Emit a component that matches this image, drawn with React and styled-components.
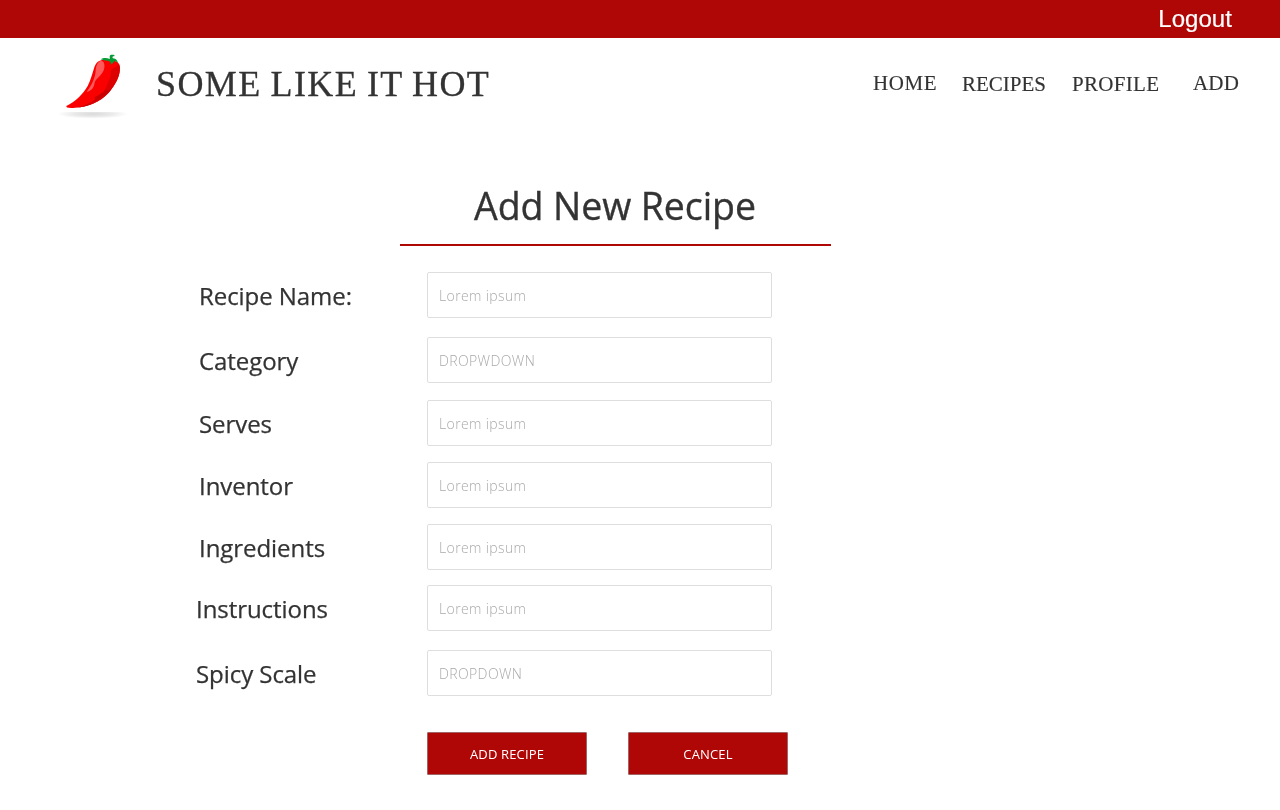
import React from "react";
import styled, { createGlobalStyle } from "styled-components";

const red = "#af0606";
const ink = "#333333";

const GlobalStyle = createGlobalStyle`
  * { box-sizing: border-box; }
  body { margin: 0; background: #fff; color: ${ink}; font-family: "Open Sans", sans-serif; }
`;

const Page = styled.div`
  width: 1280px;
  height: 810px;
  overflow: hidden;
  will-change: transform;
`;

const TopBar = styled.div`
  height: 38px;
  background: ${red};
  display: flex;
  justify-content: flex-end;
  padding: 5px 48px 0 0;
`;

const Logout = styled.a`
  color: #fff;
  font: 24px/28px "Liberation Sans", sans-serif;
  letter-spacing: 0.05px;
  -webkit-text-stroke: 0.2px;
`;

const Header = styled.header`
  height: 107px;
  display: flex;
  align-items: flex-start;
  padding-left: 50px;
`;

const Logo = styled.svg`
  width: 90px;
  height: 80px;
  margin-top: 7px;
  flex: none;
`;

const Brand = styled.div`
  width: 717px;
  margin: 26px 0 0 15px;
  padding-left: 1px;
  font: 36px/40px "Liberation Serif", serif;
  letter-spacing: 1.4px;
  word-spacing: -1.5px;
  white-space: nowrap;
  -webkit-text-stroke: 0.3px;
`;

const Nav = styled.nav`
  display: flex;
  padding-top: 33px;
`;

const NavLink = styled.a`
  width: ${(p) => p.$width}px;
  padding-top: ${(p) => p.$drop || 0}px;
  padding-left: ${(p) => p.$shift || 0}px;
  font: 21px/24px "Liberation Serif", serif;
  letter-spacing: ${(p) => p.$tracking || 0}px;
  white-space: nowrap;
  -webkit-text-stroke: 0.15px;
`;

const Title = styled.h1`
  width: 431px;
  height: 66px;
  margin: 35px 0 26px 400px;
  padding-right: 1px;
  border-bottom: 2px solid ${red};
  font-size: 37.5px;
  line-height: 52px;
  font-weight: 400;
  letter-spacing: -0.08px;
  text-align: center;
  white-space: nowrap;
  -webkit-text-stroke: 0.35px;
`;

const Row = styled.div`
  display: flex;
  height: 46px;
  margin-bottom: ${(p) => p.$gap}px;
  padding-left: ${(p) => p.$indent}px;
`;

const Label = styled.label`
  width: ${(p) => p.$width}px;
  font-size: 24px;
  line-height: 48px;
  letter-spacing: -0.06px;
  white-space: nowrap;
  -webkit-text-stroke: 0.25px;
`;

const Field = styled.div`
  width: 345px;
  height: 46px;
  padding-left: 11px;
  border: 1px solid #dedede;
  border-radius: 2px;
  color: #a9a9a9;
  font-size: 14px;
  font-weight: 300;
  line-height: 45px;
  letter-spacing: 0.38px;
`;

const Actions = styled.div`
  display: flex;
  gap: 41px;
  padding-left: 427px;
`;

const Button = styled.button`
  width: 160px;
  height: 43px;
  padding: 1px 0 0;
  border: 1px solid #a06464;
  border-radius: 1px;
  background: ${red};
  color: #fff;
  font: 13px/20px "Open Sans", sans-serif;
  letter-spacing: 0.15px;
`;

const fields = [
  { label: "Recipe Name:", value: "Lorem ipsum", gap: 19, indent: 199 },
  { label: "Category", value: "DROPWDOWN", gap: 17, indent: 199 },
  { label: "Serves", value: "Lorem ipsum", gap: 16, indent: 199 },
  { label: "Inventor", value: "Lorem ipsum", gap: 16, indent: 199 },
  { label: "Ingredients", value: "Lorem ipsum", gap: 15, indent: 199 },
  { label: "Instructions", value: "Lorem ipsum", gap: 19, indent: 196 },
  { label: "Spicy Scale", value: "DROPDOWN", gap: 36, indent: 196 },
];

function ChiliLogo() {
  return (
    <Logo viewBox="0 0 270 240">
      <defs>
        <radialGradient id="shadow">
          <stop offset="0" stopColor="#dadada" />
          <stop offset="0.5" stopColor="#e8e8e8" />
          <stop offset="1" stopColor="#ffffff" />
        </radialGradient>
        <clipPath id="ground">
          <rect x="20" y="201" width="220" height="24" />
        </clipPath>
      </defs>
      <ellipse cx="128" cy="207" rx="106" ry="14" fill="url(#shadow)" clipPath="url(#ground)" />
      <path
        d="M158 45C146 46 138 53 133 67C127 86 122 106 113 123C99 148 76 170 49 183C47 188 57 190 76 188C112 186 151 171 176 143C198 119 211 89 210 67C208 53 200 47 190 48C180 44 169 44 158 45Z"
        fill="#fb0000"
      />
      <path
        d="M206 55C212 69 210 89 200 108C180 147 139 180 90 187C119 174 145 160 161 139C172 126 172 112 179 101C182 93 183 86 182 79C187 69 196 66 203 64C205 61 206 58 206 55Z"
        fill="#dc0000"
      />
      <path
        d="M199 108C183 144 137 178 78 188C112 185 151 171 176 143C185 133 193 121 199 108ZM134 157C149 149 159 142 167 134C173 139 180 135 187 126C171 151 148 168 121 178C130 171 139 164 134 157Z"
        fill="#c90000"
      />
      <path
        d="M151 48C140 53 137 68 137 79C135 100 125 121 110 140C120 141 130 131 133 118C134 105 142 101 150 92C161 83 167 65 161 52C158 48 154 47 151 48Z"
        fill="#ff5959"
      />
      <path
        d="M152 43C159 38 171 39 178 41C184 41 183 34 181 29C184 31 193 29 193 32C188 33 186 35 188 40C195 40 202 44 204 54C198 48 193 48 191 50C190 53 188 55 182 59C184 51 180 48 174 47C169 48 161 46 152 43Z"
        fill="#079b35"
      />
      <path d="M179 36C178 28 187 28 193 30L193 34C187 33 184 34 188 41L180 42Z" fill="#079b35" />
    </Logo>
  );
}

export default function App() {
  return (
    <Page>
      <GlobalStyle />
      <TopBar>
        <Logout>Logout</Logout>
      </TopBar>
      <Header>
        <ChiliLogo />
        <Brand>SOME LIKE IT HOT</Brand>
        <Nav>
          <NavLink $width={90} $shift={1} $tracking={0.6}>HOME</NavLink>
          <NavLink $width={110} $drop={1}>RECIPES</NavLink>
          <NavLink $width={121} $drop={1} $tracking={0.3}>PROFILE</NavLink>
          <NavLink $width={60} $tracking={0.2}>ADD</NavLink>
        </Nav>
      </Header>
      <main>
        <Title>Add New Recipe</Title>
        {fields.map((f) => (
          <Row key={f.label} $gap={f.gap} $indent={f.indent}>
            <Label $width={427 - f.indent}>{f.label}</Label>
            <Field>{f.value}</Field>
          </Row>
        ))}
        <Actions>
          <Button>ADD RECIPE</Button>
          <Button>CANCEL</Button>
        </Actions>
      </main>
    </Page>
  );
}
